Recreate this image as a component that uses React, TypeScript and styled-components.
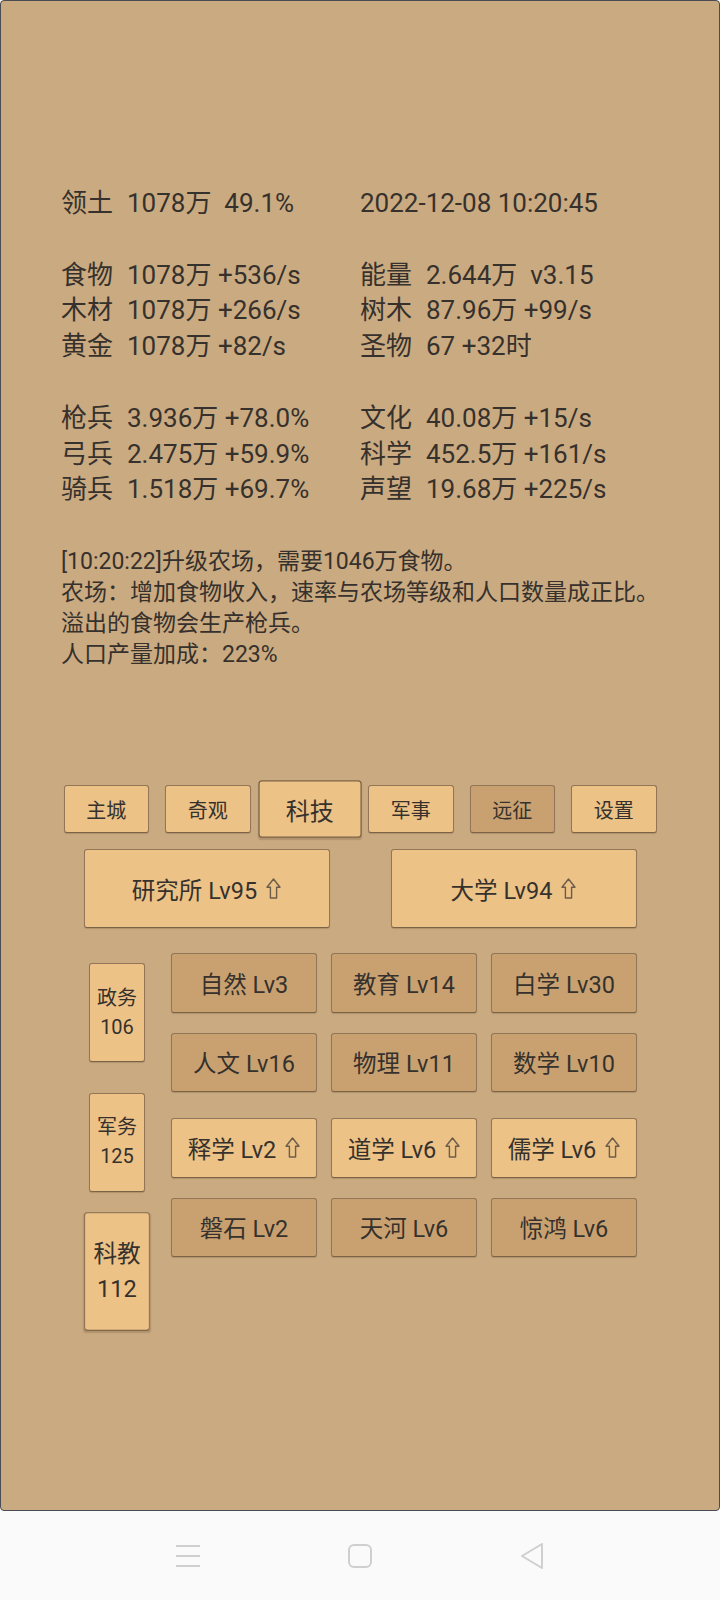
import * as React from "react";
import styled, {createGlobalStyle} from "styled-components";

const GlobalStyle = createGlobalStyle`
  html, body {
    margin: 0;
    padding: 0;
    background: #fafafa;
  }
  body {
    font-family: Roboto, "Noto Sans CJK SC", sans-serif;
    color: #36312c;
  }
`;

const Screen = styled.div`
  width: 720px;
  height: 1600px;
  display: flex;
  flex-direction: column;
`;

const Panel = styled.div`
  box-sizing: border-box;
  height: 1511px;
  background: #caaa81;
  border: 1.5px solid #4a4c53;
  border-radius: 4px;
  padding-top: 185px;
  display: flex;
  flex-direction: column;
`;

const Stats = styled.div`
  display: grid;
  grid-template-columns: 299px 1fr;
  padding-left: 60px;
  font-size: 26px;
  line-height: 35.8px;
`;

const Stat = styled.div`
  display: flex;
  white-space: pre;
  height: 35.8px;
`;

const StatLabel = styled.span`
  width: 66px;
  flex: none;
`;

const Log = styled.div`
  margin-top: 38px;
  padding-left: 60px;
  font-size: 23px;
  line-height: 31px;
`;

const Tabs = styled.div`
  margin-top: 115px;
  display: flex;
  justify-content: center;
  gap: 16px;
`;

const Button = styled.div<{$light?: boolean}>`
  box-sizing: border-box;
  display: flex;
  align-items: center;
  justify-content: center;
  background: ${p => (p.$light ? "#ecc287" : "#c9a171")};
  border: 1px solid #937657;
  border-bottom-color: #7c6247;
  border-radius: 3px;
  box-shadow: 0 1px 1px rgba(60, 40, 20, 0.18);
  color: #36312c;
  white-space: nowrap;
`;

const Tab = styled(Button)<{$active?: boolean}>`
  width: 85.5px;
  height: 48px;
  font-size: 20px;
  transform: ${p => (p.$active ? "scale(1.2)" : "none")};
  ${p => p.$active && "border-color: #7c6247;"}
`;

const BigRow = styled.div`
  margin-top: 16px;
  display: flex;
  justify-content: center;
  gap: 61px;
`;

const BigButton = styled(Button)`
  width: 246px;
  height: 79px;
  font-size: 23.5px;
  gap: 9px;
`;

const Lower = styled.div`
  margin-top: 25px;
  display: flex;
  padding-left: 88px;
  gap: 26px;
`;

const SideColumn = styled.div`
  margin-top: 10px;
  display: flex;
  flex-direction: column;
  gap: 30.5px;
`;

const SideButton = styled(Button)<{$active?: boolean}>`
  width: 56px;
  height: 99px;
  flex-direction: column;
  font-size: 20px;
  line-height: 29px;
  transform: ${p => (p.$active ? "scale(1.18, 1.2)" : "none")};
`;

const Groups = styled.div`
  display: flex;
  flex-direction: column;
  gap: 26px;
`;

const Grid = styled.div`
  display: grid;
  grid-template-columns: repeat(3, 146px);
  column-gap: 14px;
  row-gap: 20px;
`;

const Cell = styled(Button)`
  height: 59.5px;
  font-size: 23.5px;
  gap: 9px;
`;

const NavBar = styled.div`
  flex: 1;
  display: flex;
  align-items: center;
  justify-content: center;
  gap: 146px;
`;

const UpArrow = () => (
  <svg width="15" height="21" viewBox="0 0 15 21" fill="none">
    <path
      d="M7.5 1 L14 9.2 H10.6 V20 H4.4 V9.2 H1 Z"
      stroke="#6d5c4a"
      strokeWidth="1.4"
      strokeLinejoin="round"
    />
  </svg>
);

const statRows: [string, string, string, string][] = [
  ["领土", "1078万  49.1%", "", "2022-12-08 10:20:45"],
  ["", "", "", ""],
  ["食物", "1078万 +536/s", "能量", "2.644万  v3.15"],
  ["木材", "1078万 +266/s", "树木", "87.96万 +99/s"],
  ["黄金", "1078万 +82/s", "圣物", "67 +32时"],
  ["", "", "", ""],
  ["枪兵", "3.936万 +78.0%", "文化", "40.08万 +15/s"],
  ["弓兵", "2.475万 +59.9%", "科学", "452.5万 +161/s"],
  ["骑兵", "1.518万 +69.7%", "声望", "19.68万 +225/s"],
];

const tabs = ["主城", "奇观", "科技", "军事", "远征", "设置"];

const groups: {name: string; up?: boolean; light?: boolean}[][] = [
  [
    {name: "自然 Lv3"},
    {name: "教育 Lv14"},
    {name: "白学 Lv30"},
    {name: "人文 Lv16"},
    {name: "物理 Lv11"},
    {name: "数学 Lv10"},
  ],
  [
    {name: "释学 Lv2", up: true, light: true},
    {name: "道学 Lv6", up: true, light: true},
    {name: "儒学 Lv6", up: true, light: true},
    {name: "磐石 Lv2"},
    {name: "天河 Lv6"},
    {name: "惊鸿 Lv6"},
  ],
];

const sides = [
  {name: "政务", value: "106"},
  {name: "军务", value: "125"},
  {name: "科教", value: "112", active: true},
];

export default function App() {
  return (
    <Screen>
      <GlobalStyle />
      <Panel>
        <Stats>
          {statRows.map((r, i) => (
            <React.Fragment key={i}>
              <Stat>
                {r[0] && <StatLabel>{r[0]}</StatLabel>}
                {r[1]}
              </Stat>
              <Stat>
                {r[2] && <StatLabel>{r[2]}</StatLabel>}
                {r[3]}
              </Stat>
            </React.Fragment>
          ))}
        </Stats>
        <Log>
          <div>[10:20:22]升级农场，需要1046万食物。</div>
          <div>农场：增加食物收入，速率与农场等级和人口数量成正比。</div>
          <div>溢出的食物会生产枪兵。</div>
          <div>人口产量加成：223%</div>
        </Log>
        <Tabs>
          {tabs.map(t => (
            <Tab key={t} $light={t !== "远征"} $active={t === "科技"}>
              {t}
            </Tab>
          ))}
        </Tabs>
        <BigRow>
          <BigButton $light>
            研究所 Lv95 <UpArrow />
          </BigButton>
          <BigButton $light>
            大学 Lv94 <UpArrow />
          </BigButton>
        </BigRow>
        <Lower>
          <SideColumn>
            {sides.map(s => (
              <SideButton key={s.name} $light $active={s.active}>
                <span>{s.name}</span>
                <span>{s.value}</span>
              </SideButton>
            ))}
          </SideColumn>
          <Groups>
            {groups.map((g, gi) => (
              <Grid key={gi}>
                {g.map(c => (
                  <Cell key={c.name} $light={c.light}>
                    {c.name}
                    {c.up && <UpArrow />}
                  </Cell>
                ))}
              </Grid>
            ))}
          </Groups>
        </Lower>
      </Panel>
      <NavBar>
        <svg width="26" height="24" viewBox="0 0 26 24">
          <g stroke="#cfcfcf" strokeWidth="2">
            <line x1="1" y1="2" x2="25" y2="2" />
            <line x1="1" y1="12" x2="25" y2="12" />
            <line x1="1" y1="22" x2="25" y2="22" />
          </g>
        </svg>
        <svg width="26" height="26" viewBox="0 0 26 26">
          <rect x="2" y="2" width="22" height="22" rx="5" fill="none" stroke="#cfcfcf" strokeWidth="2" />
        </svg>
        <svg width="26" height="28" viewBox="0 0 26 28">
          <path d="M23 2 L3 14 L23 26 Z" fill="none" stroke="#cfcfcf" strokeWidth="2" strokeLinejoin="round" />
        </svg>
      </NavBar>
    </Screen>
  );
}
